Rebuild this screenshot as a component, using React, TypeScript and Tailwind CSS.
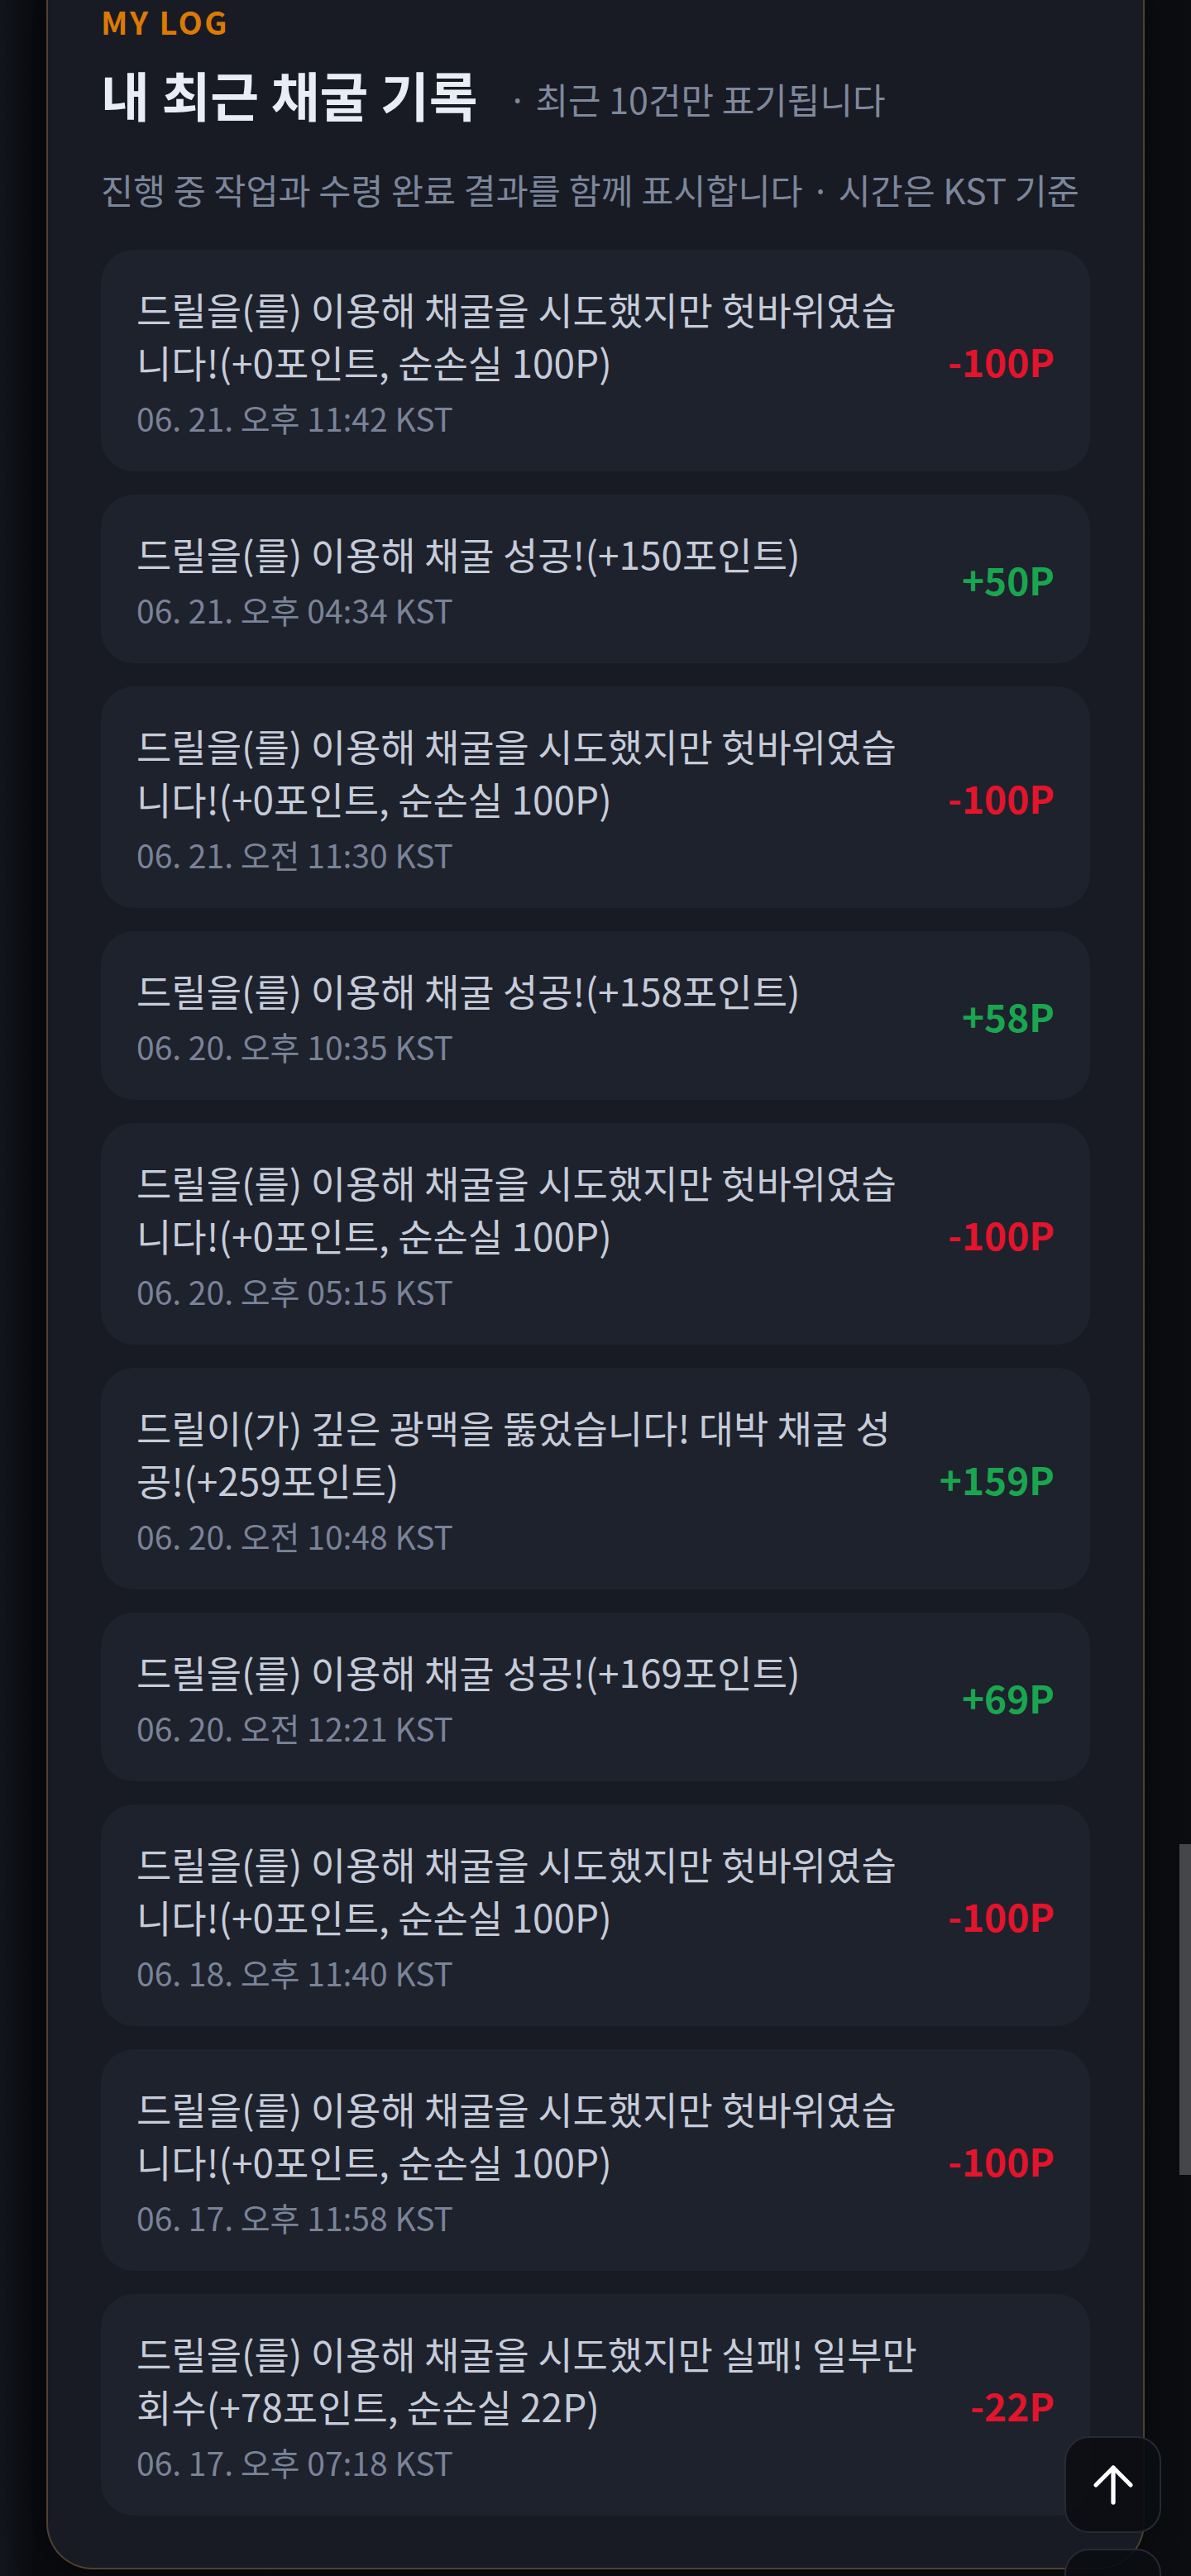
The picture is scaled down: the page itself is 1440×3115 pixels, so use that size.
import React from "react";
import { ArrowUp } from "lucide-react";

type Log = { text: string; time: string; amount: string; up: boolean };

const FAIL = "드릴을(를) 이용해 채굴을 시도했지만 헛바위였습니다!(+0포인트, 순손실 100P)";

const logs: Log[] = [
  { text: FAIL, time: "06. 21. 오후 11:42 KST", amount: "-100P", up: false },
  { text: "드릴을(를) 이용해 채굴 성공!(+150포인트)", time: "06. 21. 오후 04:34 KST", amount: "+50P", up: true },
  { text: FAIL, time: "06. 21. 오전 11:30 KST", amount: "-100P", up: false },
  { text: "드릴을(를) 이용해 채굴 성공!(+158포인트)", time: "06. 20. 오후 10:35 KST", amount: "+58P", up: true },
  { text: FAIL, time: "06. 20. 오후 05:15 KST", amount: "-100P", up: false },
  { text: "드릴이(가) 깊은 광맥을 뚫었습니다! 대박 채굴 성공!(+259포인트)", time: "06. 20. 오전 10:48 KST", amount: "+159P", up: true },
  { text: "드릴을(를) 이용해 채굴 성공!(+169포인트)", time: "06. 20. 오전 12:21 KST", amount: "+69P", up: true },
  { text: FAIL, time: "06. 18. 오후 11:40 KST", amount: "-100P", up: false },
  { text: FAIL, time: "06. 17. 오후 11:58 KST", amount: "-100P", up: false },
  { text: "드릴을(를) 이용해 채굴을 시도했지만 실패! 일부만 회수(+78포인트, 순손실 22P)", time: "06. 17. 오후 07:18 KST", amount: "-22P", up: false },
];

function LogCard({ log }: { log: Log }) {
  return (
    <li className="flex items-center gap-8 rounded-[40px] bg-[#1e222d] px-[43px] py-[39px]">
      <div className="min-w-0 flex-1">
        <p className="text-[46px] leading-[64px] text-[#c6ccd9]">{log.text}</p>
        <p className="mt-[10px] text-[39px] leading-[52px] text-[#7b8398]">{log.time}</p>
      </div>
      <span
        className={
          log.up
            ? "shrink-0 text-[46px] font-bold text-[#19a64f]"
            : "shrink-0 text-[46px] font-bold text-[#e3142b]"
        }
      >
        {log.amount}
      </span>
    </li>
  );
}

export default function App() {
  return (
    <div
      className="relative min-h-[3115px] overflow-hidden bg-[linear-gradient(90deg,#12151b_0%,#0a0b0f_3%,#0b0d11_100%)]"
      style={{ fontFamily: "'Noto Sans CJK KR', 'Noto Sans', sans-serif" }}
    >
      <section className="ml-[56px] w-[1328px] rounded-b-[56px] border-x-2 border-b-2 border-[#4f422f] bg-[#181b24] px-[64px] pb-[63px] pt-[3px] shadow-[0_0_40px_rgba(0,0,0,0.5)]">
        <p className="text-[38px] font-bold leading-[46px] tracking-[0.065em] text-[#dc7a05]">MY LOG</p>
        <div className="mt-[28px] flex items-end">
          <h2 className="text-[64px] font-bold leading-[72px] text-[#e9edf6]">내 최근 채굴 기록</h2>
          <span className="ml-[36px] text-[43px] leading-[60px] text-[#7f889c]">· 최근 10건만 표기됩니다</span>
        </div>
        <p className="mt-[50px] whitespace-nowrap text-[42.5px] leading-[60px] text-[#7c869b]">
          진행 중 작업과 수령 완료 결과를 함께 표시합니다 · 시간은 KST 기준
        </p>
        <ul className="mt-[43px] flex flex-col gap-[28px]">
          {logs.map((log, i) => (
            <LogCard key={i} log={log} />
          ))}
        </ul>
      </section>

      <div className="absolute right-0 top-[2230px] h-[400px] w-[14px] bg-[#45464a]" />

      <button className="absolute left-[1287px] top-[2946px] flex h-[117px] w-[117px] items-center justify-center rounded-[30px] border-2 border-[#262a33] bg-[#0b0d12]/90">
        <ArrowUp size={72} strokeWidth={1.75} color="#ffffff" />
      </button>
      <div className="absolute left-[1287px] top-[3082px] h-[117px] w-[117px] rounded-[30px] border-2 border-[#262a33] bg-[#0b0d12]/90" />
    </div>
  );
}
